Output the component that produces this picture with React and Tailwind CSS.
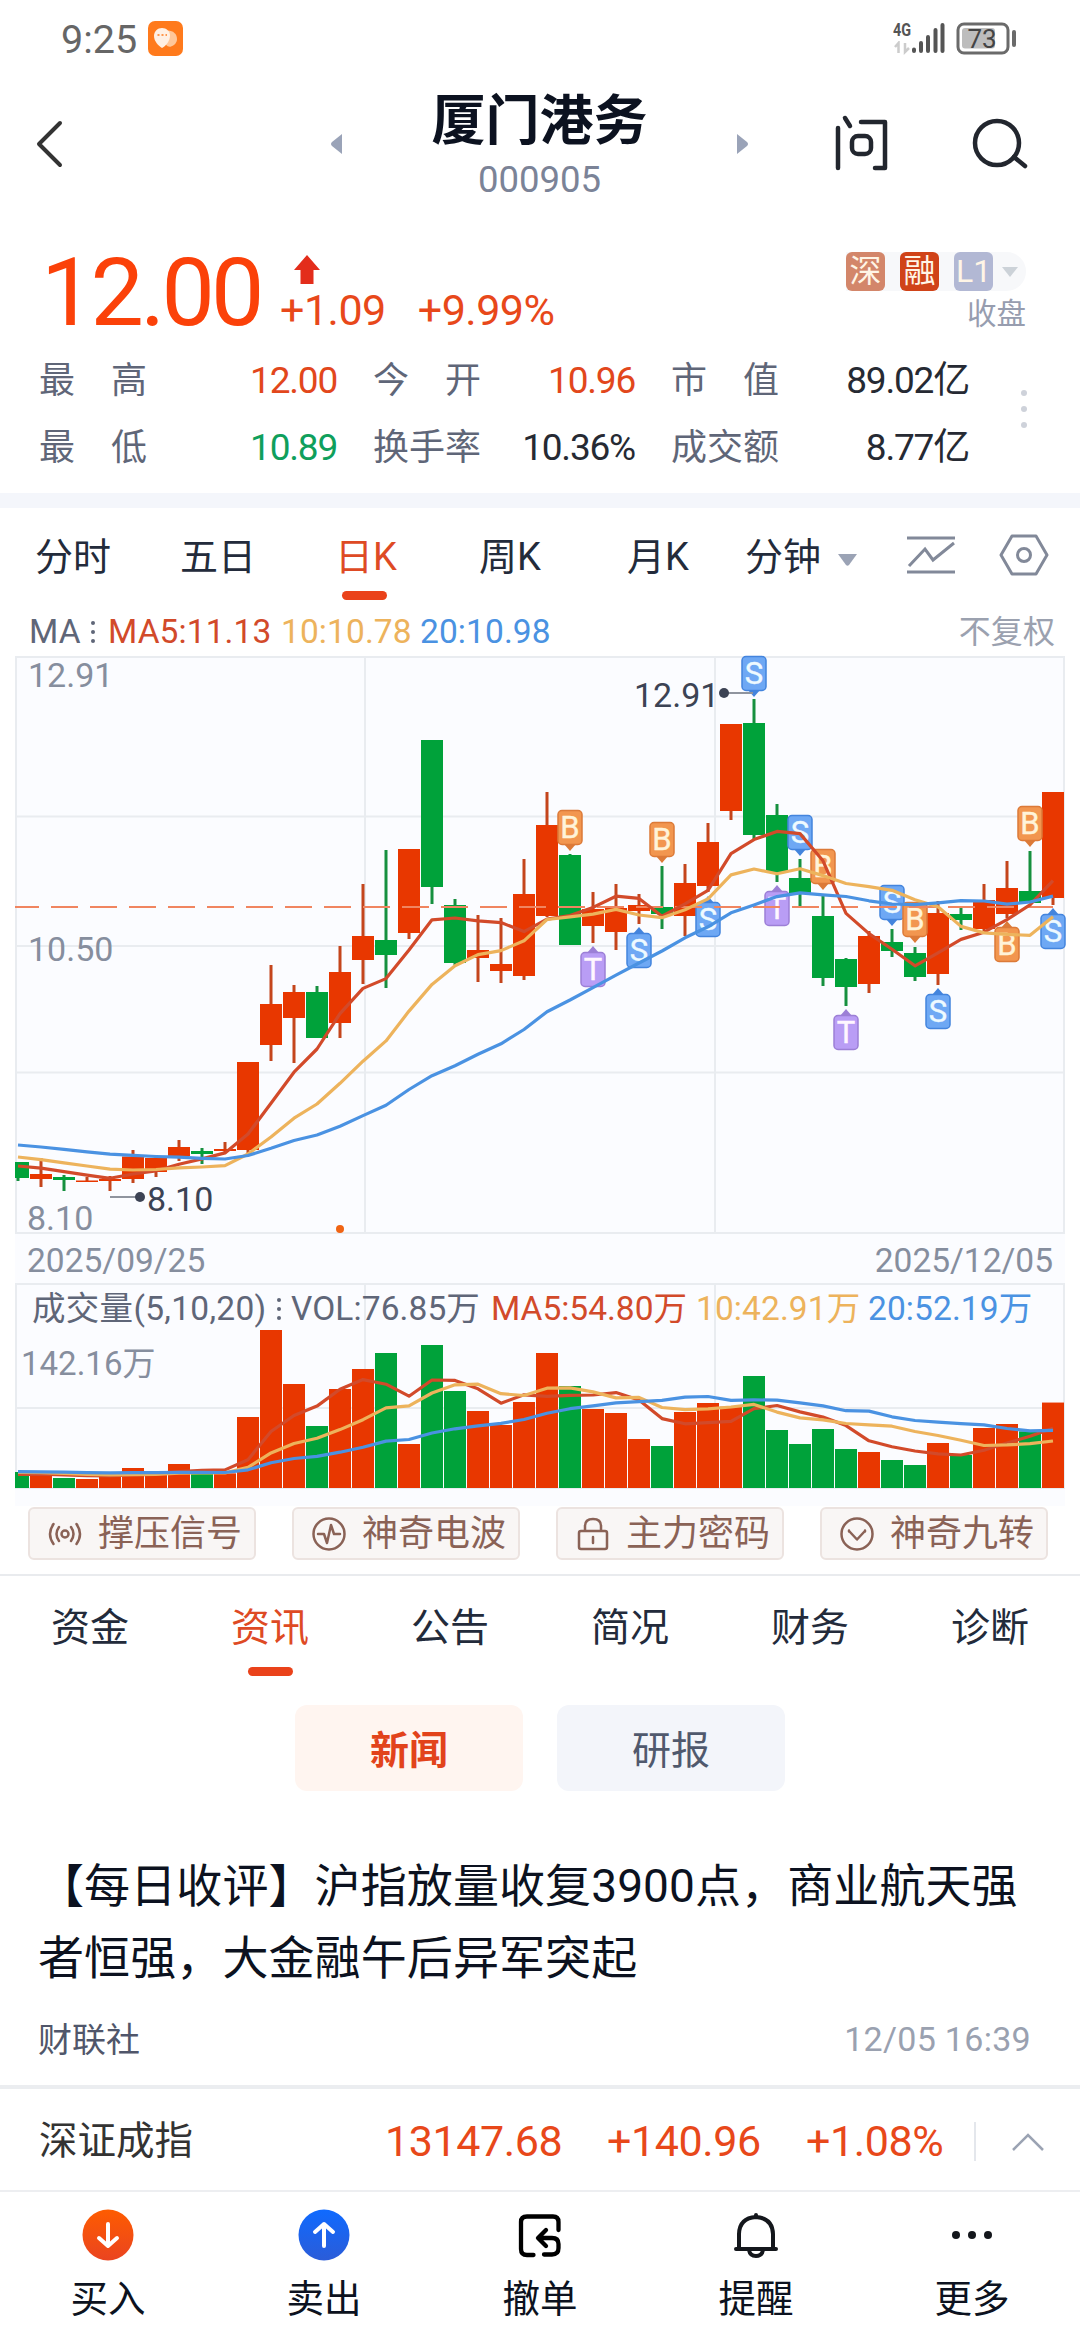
import React from "react";

// one trading day: [up, open/close top, open/close bottom, high, low, volume]
const days = [
  [0, 1162, 1178, 1162, 1181, 14.4],
  [1, 1174, 1179, 1158, 1187, 12.3],
  [0, 1177, 1180, 1175, 1191, 9],
  [1, 1180.5, 1182, 1177, 1182, 8.1],
  [1, 1179, 1181, 1176, 1191, 11.1],
  [1, 1156.5, 1179, 1150, 1183, 18],
  [1, 1158, 1172, 1155, 1177, 15.3],
  [1, 1147, 1156, 1140, 1161, 21.6],
  [0, 1151, 1154, 1148, 1164, 13.2],
  [1, 1149, 1151, 1142, 1152, 13.2],
  [1, 1062, 1150, 1062, 1154, 63.9],
  [1, 1004, 1045, 965, 1061, 142.2],
  [1, 992, 1018, 985, 1063, 93.6],
  [0, 992, 1038, 986, 1038, 55.8],
  [1, 972, 1023, 946, 1038, 89.1],
  [1, 936, 960, 884, 984, 107.1],
  [0, 940, 955, 850, 988, 121.5],
  [1, 849, 933, 849, 939, 39.6],
  [0, 740, 887, 740, 904, 128.7],
  [0, 905, 963, 899, 965, 87.3],
  [1, 950, 958, 915, 982, 69.3],
  [1, 964, 971, 918, 983, 56.7],
  [1, 894, 976, 859, 980, 77.4],
  [1, 825, 916, 792, 917, 121.5],
  [0, 855, 945, 854, 945, 91.8],
  [1, 909, 926, 892, 943, 71.1],
  [1, 908, 932, 884, 950, 67.5],
  [1, 905, 911, 894, 924, 44.1],
  [0, 907, 914, 866, 929, 37.8],
  [1, 883, 916, 864, 936, 68.4],
  [1, 842, 886, 823, 892, 76.5],
  [1, 724, 811, 724, 820, 73.2],
  [0, 723, 835, 699, 840, 100.8],
  [0, 815, 873, 804, 882, 52.2],
  [0, 878, 894, 859, 906, 39.6],
  [0, 916, 978, 894, 986, 53.1],
  [0, 959, 987, 958, 1006, 35.1],
  [1, 936, 984, 931, 993, 32.4],
  [0, 942, 951, 929, 957, 25.2],
  [0, 953, 977, 947, 981, 20.7],
  [1, 913, 974, 901, 985, 40.5],
  [0, 914, 920, 906, 930, 29.7],
  [1, 900, 929, 884, 933, 54],
  [1, 888, 914, 861, 918, 57.6],
  [0, 891, 903, 851, 903, 51],
  [1, 792, 898, 792, 905, 76.9],
];

// the 19 days before the first one on screen, needed by the averages
const closesBefore = [...Array(10).fill(1133), ...Array(5).fill(1148), ...Array(4).fill(1163)];
const volumesBefore = [...Array(10).fill(15.3), ...Array(5).fill(15.9), ...Array(4).fill(11.8)];

const closes = [...closesBefore, ...days.map((d) => (d[0] ? d[1] : d[2]))];
const volumes = [...volumesBefore, ...days.map((d) => d[5])];

const xOf = (i) => 18 + i * 23;
const volY = (v) => 1488 - v / 0.9;

const average = (list, n) =>
  days.map((_, i) => {
    const end = i + 20;
    return list.slice(end - n, end).reduce((a, b) => a + b, 0) / n;
  });

const toPoints = (ys) => ys.map((y, i) => `${xOf(i)},${y.toFixed(1)}`).join(" ");

// day index, letter, y of the tip, pointer direction
const marks = [
  [24, "B", 851, "down"],
  [28, "B", 863, "down"],
  [32, "S", 697, "down"],
  [34, "S", 856, "down"],
  [35, "B", 890, "down"],
  [38, "S", 926, "down"],
  [39, "B", 943, "down"],
  [44, "B", 847, "down"],
  [25, "T", 946, "up"],
  [27, "S", 927, "up"],
  [30, "S", 896, "up"],
  [33, "T", 885, "up"],
  [36, "T", 1009, "up"],
  [40, "S", 988, "up"],
  [43, "B", 921, "up"],
  [45, "S", 908, "up"],
];

const markColors = {
  B: ["#f2964f", "#dc7a38", "#fff3d8"],
  S: ["#6ea8f4", "#4384dd", "#eefaff"],
  T: ["#b99df5", "#9c7fd6", "#fff6ff"],
};

const Mark = ({ index, letter, tip, dir }) => {
  const x = xOf(index);
  const s = dir === "down" ? -1 : 1;
  const top = dir === "down" ? tip - 41 : tip + 6;
  const [fill, stroke, text] = markColors[letter];
  return (
    <g>
      <path d={`M${x - 6} ${tip + s * 7}L${x} ${tip}L${x + 6} ${tip + s * 7}Z`} fill={stroke} />
      <rect x={x - 12} y={top + 0.5} width="24" height="34" rx="4" fill={fill} stroke={stroke} strokeWidth="1.5" />
      <text x={x} y={top + 28} textAnchor="middle" fontSize="31" fill={text} stroke={text} strokeWidth="0.4">
        {letter}
      </text>
    </g>
  );
};

const lineColors = ["#d24a2a", "#edb35c", "#4a92e2"];

const Lines = ({ list, map = (v) => v }) => (
  <g fill="none" strokeWidth="3.2" strokeLinejoin="round">
    {[5, 10, 20].map((n, k) => (
      <polyline key={n} points={toPoints(average(list, n).map(map))} stroke={lineColors[k]} />
    ))}
  </g>
);

const PriceChart = () => (
  <svg className="block h-[578px] w-[1050px] overflow-visible" viewBox="15 656 1050 578">
    <g stroke="#e9ecf0" strokeWidth="2" fill="none">
      <rect x="16" y="657" width="1048" height="576" />
      <path d="M15 816.5H1064M15 946H1064M15 1072.5H1064M365 657V1233M715 657V1233" />
    </g>
    <g fontSize="34" fill="#868e9e">
      <text x="28" y="687">12.91</text>
      <text x="28" y="961">10.50</text>
      <text x="27" y="1230">8.10</text>
    </g>
    {days.map(([up, top, bottom, high, low], i) => (
      <g key={i}>
        <rect x={xOf(i) - 1.5} y={high} width="3" height={low - high} fill={up ? "#c4451c" : "#16903f"} />
        <rect x={i ? xOf(i) - 11 : 15} y={top} width={i ? 22 : 14} height={bottom - top} fill={up ? "#e83700" : "#00a23a"} />
      </g>
    ))}
    {marks.map(([index, letter, tip, dir]) => (
      <Mark key={index} index={index} letter={letter} tip={tip} dir={dir} />
    ))}
    <path d="M15 907H1053" stroke="#f08560" strokeWidth="2" strokeDasharray="27 12" strokeDashoffset="3" />
    <Lines list={closes} />
    <g fill="#3c4354">
      <path d="M724 693H753M110 1197H140" stroke="#8f949e" strokeWidth="2" />
      <circle cx="724" cy="693" r="5" />
      <circle cx="140" cy="1197" r="5" />
      <text x="634" y="707" fontSize="34">12.91</text>
      <text x="147" y="1211" fontSize="34">8.10</text>
    </g>
    <circle cx="340" cy="1229" r="4" fill="#f06414" />
  </svg>
);

const VolumeChart = () => (
  <svg className="block h-[206px] w-[1050px]" viewBox="15 1283 1050 206">
    <path d="M16 1284H1064V1488H16ZM15 1408H1064M365 1284V1488M715 1284V1488" stroke="#e9ecf0" strokeWidth="2" fill="none" />
    {days.map(([up, , , , , vol], i) => (
      <rect key={i} x={xOf(i) - 11} y={volY(vol)} width="22" height={1488 - volY(vol)} fill={up ? "#e83700" : "#00a23a"} />
    ))}
    <Lines list={volumes} map={volY} />
  </svg>
);

const StatusBar = () => (
  <div className="flex h-[76px] items-center px-[61px] text-[#666]">
    <span className="pt-[4px] text-[39.5px] leading-none">9:25</span>
    <svg className="ml-[11px] size-[35px]" viewBox="0 0 35 35">
      <rect width="35" height="35" rx="7" fill="#ff7a1c" />
      <path d="M20 9.5c5 0 9 3.5 9 8.5 0 4-3 6.5-6 7.5-3 1-7-2-7-8z" fill="#ffc79a" />
      <path d="M14 7c4.5 0 8 3.3 8 7.5 0 5-3.5 10-8 12.5-4-2.5-8-7-8-12C6 10.500 9.500 7 14 7z" fill="#fff0e4" />
      <path d="M9.5 14h2M13.5 14h2M17.5 14h1.5" stroke="#ff7a1c" strokeWidth="1.5" />
    </svg>
    <div className="ml-auto flex h-[36px] w-[19px] flex-col">
      <span className="origin-left scale-x-80 text-[18px] leading-[20px] font-bold text-[#555]">4G</span>
      <svg className="mt-[1px] h-[14px] w-[19px]" viewBox="893 40 19 14" stroke="#ccc" strokeWidth="2.5" fill="none">
        <path d="M895 46l3.500-4v10M905 42v9l4-4" />
      </svg>
    </div>
    <svg className="h-[34px] w-[107px]" viewBox="912 20 107 34">
      <path d="M914 48.5V50M921 42V50M928 36V50M935.5 29V50M942.5 24V50" stroke="#555" strokeWidth="4" strokeLinecap="round" />
      <rect x="958" y="23" width="50" height="29" rx="6" fill="none" stroke="#6a6a6a" strokeWidth="3" />
      <rect x="962" y="27" width="33" height="20.5" rx="3" fill="#bdbdbd" />
      <text x="982" y="46.5" textAnchor="middle" fontSize="26" fill="#444">73</text>
      <path d="M1014 31V44" stroke="#6a6a6a" strokeWidth="4" strokeLinecap="round" />
    </svg>
  </div>
);

const Header = () => (
  <header className="flex h-[152px] items-start justify-between pl-[34px] pr-[50px]">
    <svg className="mt-[43px] h-[50px] w-[32px]" viewBox="0 0 32 50" fill="none" stroke="#333" strokeWidth="4" strokeLinecap="round" strokeLinejoin="round">
      <path d="M26 4L5 25L26 46" />
    </svg>
    <div className="ml-[180px] flex w-[417px] items-start justify-between">
      <svg className="mt-[58px] h-[20px] w-[11px]" viewBox="0 0 11 20" fill="#9aa3b8">
        <path d="M11 0V20L1 12Q-1 10 1 8Z" />
      </svg>
      <div className="text-center">
        <h1 className="h-[79px] pt-[14px] text-[54px] leading-[64px] font-bold text-[#0c1220]">厦门港务</h1>
        <p className="pt-[5px] text-[36.5px] leading-[40px] text-[#7b8397]">000905</p>
      </div>
      <svg className="mt-[58px] h-[20px] w-[11px]" viewBox="0 0 11 20" fill="#9aa3b8">
        <path d="M0 0V20L10 12Q12 10 10 8Z" />
      </svg>
    </div>
    <div className="flex gap-[81px]">
      <svg className="mt-[38px] h-[58px] w-[58px]" viewBox="833 114 58 58" fill="none" stroke="#22262e" strokeWidth="4.5" strokeLinecap="round" strokeLinejoin="round">
        <path d="M838 128V168M845 118L850 126M861 122H885V168H875" />
        <rect x="852" y="136" width="19" height="18" rx="6" />
      </svg>
      <svg className="mt-[42px] size-[58px]" viewBox="972 118 58 58" fill="none" stroke="#22262e" strokeWidth="4.5" strokeLinecap="round">
        <circle cx="997" cy="143" r="22" />
        <path d="M1014 157L1025 166" />
      </svg>
    </div>
  </header>
);

const stats = [
  [["最", "高"], "12.00", "text-[#e2471c]", ["今", "开"], "10.96", "text-[#e2471c]", ["市", "值"], "89.02亿"],
  [["最", "低"], "10.89", "text-[#0f9f5c]", ["换", "手", "率"], "10.36%", "text-[#262a33]", ["成", "交", "额"], "8.77亿"],
];

const Stat = ({ label, value, color, className }) => (
  <div className={`flex items-center justify-between ${className}`}>
    <span className="flex w-[108px] justify-between text-[36px] text-[#5f6678]">
      {label.map((c) => (
        <span key={c}>{c}</span>
      ))}
    </span>
    <span className={`text-[37px] tracking-[-1.2px] ${color}`}>{value}</span>
  </div>
);

const Quote = () => (
  <section className="h-[265px]">
    <div className="flex h-[119px] items-start pl-[41px] pr-[54px]">
      <span className="w-[239px] text-[95px] leading-[130px] tracking-[-3.8px] text-[#fb4109]">12.00</span>
      <div className="pt-[27px]">
        <svg className="ml-[13px] h-[30px] w-[28px]" viewBox="0 0 28 30">
          <path d="M14 0L27 15H20.5V29H7.5V15H1Z" fill="#e32d1b" />
        </svg>
        <div className="flex gap-[32px] text-[43px] leading-[50px] tracking-[-0.5px] text-[#e8481a]">
          <span>+1.09</span>
          <span>+9.99%</span>
        </div>
      </div>
      <div className="ml-auto flex flex-col items-end pt-[24px]">
        <div className="flex items-center gap-[15px] rounded-r-full bg-[#f7f8fa] text-[32px] leading-[39px] text-[#fff5e6]">
          <span className="size-[39px] rounded-md bg-[#d3866a] text-center">深</span>
          <span className="size-[39px] rounded-md bg-[#d04318] text-center">融</span>
          <span className="flex items-center gap-[9px]">
            <span className="size-[39px] rounded-md bg-[#b2b8d4] text-center">L1</span>
            <svg className="mr-[8px] h-[10px] w-[16px]" viewBox="0 0 16 10" fill="#ccd2d8">
              <path d="M0 0H16L8 10Z" />
            </svg>
          </span>
        </div>
        <span className="pt-[5px] text-[29.5px] leading-[36px] text-[#979daf]">收盘</span>
      </div>
    </div>
    <div className="flex">
      <div className="flex-1 pl-[39px]">
        {stats.map(([l1, v1, c1, l2, v2, c2, l3, v3]) => (
          <div key={v1} className="flex h-[67px]">
            <Stat label={l1} value={v1} color={c1} className="w-[298px]" />
            <Stat label={l2} value={v2} color={c2} className="ml-[36px] w-[262px]" />
            <Stat label={l3} value={v3} color="text-[#262a33]" className="ml-[36px] w-[298px]" />
          </div>
        ))}
      </div>
      <div className="mr-[53px] flex flex-col items-center gap-[10px] pt-[43px]">
        <i className="size-[6px] rounded-full bg-[#ced2da]" />
        <i className="size-[6px] rounded-full bg-[#ced2da]" />
        <i className="size-[6px] rounded-full bg-[#ced2da]" />
      </div>
    </div>
  </section>
);

const ChartTabs = () => (
  <div className="flex h-[98px] items-start pt-[24px] text-[38px] leading-[50px] text-[#232b3b]">
    <span className="ml-[35px] w-[145px]">分时</span>
    <span className="w-[155px]">五日</span>
    <span className="flex w-[144px] flex-col items-start text-[#de4a24]">
      日K
      <i className="mt-[9px] ml-[7px] h-[9px] w-[45px] rounded-full bg-[#ea421a]" />
    </span>
    <span className="w-[148px]">周K</span>
    <span className="w-[118px]">月K</span>
    <span>分钟</span>
    <svg className="mt-[22px] ml-[17px] h-[12px] w-[19px]" viewBox="0 0 19 12" fill="#9ba3b5">
      <path d="M0 0H19L11 11Q9.5 12.5 8 11Z" />
    </svg>
    <svg className="mt-[3px] ml-[49px] h-[40px] w-[50px]" viewBox="906 534 50 40" fill="none" stroke="#828999" strokeWidth="3">
      <path d="M907 537H955M907 571H955M909 565L925 548L933 559L954 542" />
    </svg>
    <svg className="ml-[43px] h-[46px] w-[50px]" viewBox="999 531 50 46" fill="none" stroke="#828999" strokeWidth="3">
      <path d="M1012 535H1036L1047 554L1036 573H1012L1001 554Z" strokeLinejoin="round" />
      <circle cx="1024" cy="554" r="6.5" />
    </svg>
  </div>
);

const Dots = () => (
  <span className="flex flex-col gap-[5px]">
    <i className="size-[4px] rounded-full bg-[#5f6678]" />
    <i className="size-[4px] rounded-full bg-[#5f6678]" />
    <i className="size-[4px] rounded-full bg-[#5f6678]" />
  </span>
);

const MaRow = () => (
  <div className="flex h-[50px] items-center pt-[1px] pl-[29px] pr-[25px] text-[33.5px] leading-none tracking-[0.1px]">
    <span className="w-[62px] text-[#5f6678]">MA</span>
    <Dots />
    <span className="ml-[13px] w-[173px] text-[#d24a2a]">MA5:11.13</span>
    <span className="w-[139px] text-[#edb35c]">10:10.78</span>
    <span className="text-[#4a92e2]">20:10.98</span>
    <span className="ml-auto text-[32px] text-[#9ba1af]">不复权</span>
  </div>
);

const VolumeLabels = () => (
  <div className="absolute top-0 left-0 w-full text-[33.5px] leading-[33px]">
    <div className="flex items-center pt-[9px] pl-[17px]">
      <span className="w-[245px] tracking-[0.3px] text-[#5f6678]">成交量(5,10,20)</span>
      <Dots />
      <span className="ml-[10px] w-[200px] tracking-[0.1px] text-[#5f6678]">VOL:76.85万</span>
      <span className="w-[205px] text-[#d24a2a]">MA5:54.80万</span>
      <span className="w-[172px] tracking-[0.1px] text-[#edb35c]">10:42.91万</span>
      <span className="tracking-[0.1px] text-[#4a92e2]">20:52.19万</span>
    </div>
    <div className="pt-[22px] pl-[6px] text-[33px] text-[#868e9e]">142.16万</div>
  </div>
);

const signals = [
  ["撑压信号", "M17 13.5a3.5 3.5 0 1 0 0 7 3.5 3.5 0 1 0 0-7M11 10q-5 7 0 14M23 10q5 7 0 14M5.5 7q-7 10 0 20M28.5 7q7 10 0 20"],
  ["神奇电波", "M17 1.5a15.5 15.5 0 1 0 0 31 15.5 15.5 0 1 0 0-31M6 17h6l3 9 4-18 3 9h6"],
  ["主力密码", "M5 14h24q2 0 2 2v14q0 2-2 2H5q-2 0-2-2V16q0-2 2-2ZM9 14V9q0-7 8-7t8 7v5M17 20v6"],
  ["神奇九转", "M17 1.5a15.5 15.5 0 1 0 0 31 15.5 15.5 0 1 0 0-31M9.5 14.5l7.5 8 7.5-8M9 13.5v1M25 13.5v1"],
];

const Signals = () => (
  <div className="flex h-[68px] items-start gap-[36px] pt-[1px] pl-[28px]">
    {signals.map(([name, d]) => (
      <div key={name} className="flex h-[53px] w-[228px] items-center rounded-md border-2 border-[#ece3e0] bg-[#f9f6f5] pl-[18px] text-[#8a6256]">
        <svg className="size-[34px]" viewBox="0 0 34 34" fill="none" stroke="#8a6256" strokeWidth="2.5" strokeLinecap="round" strokeLinejoin="round">
          <path d={d} />
        </svg>
        <span className="ml-[16px] pt-[1px] text-[36px] leading-none">{name}</span>
      </div>
    ))}
  </div>
);

const InfoTabs = () => (
  <div className="flex h-[129px] border-t-2 border-[#e9ebee] pt-[26px] text-[39px] leading-[52px] text-[#232b3b]">
    {["资金", "资讯", "公告", "简况", "财务", "诊断"].map((name) => (
      <div key={name} className={`flex w-[180px] flex-col items-center ${name === "资讯" ? "text-[#de4a24]" : ""}`}>
        {name}
        {name === "资讯" && <i className="mt-[13px] h-[9px] w-[45px] rounded-full bg-[#ea421a]" />}
      </div>
    ))}
  </div>
);

const News = () => (
  <section className="h-[382px]">
    <div className="flex justify-center gap-[34px] pt-[2px] text-[39px] leading-[93px]">
      <span className="h-[86px] w-[228px] rounded-xl bg-[#fff5f0] text-center font-bold text-[#e2431b]">新闻</span>
      <span className="h-[86px] w-[228px] rounded-xl bg-[#f3f5fa] text-center text-[#50596d]">研报</span>
    </div>
    <p className="pt-[59px] pl-[38px] text-[46px] leading-[72px] tracking-[0.1px] text-[#0c1220]">
      【每日收评】沪指放量收复3900点，商业航天强
      <br />
      者恒强，大金融午后异军突起
    </p>
    <div className="flex items-center justify-between pt-[23px] pl-[38px] pr-[49px] text-[34px] leading-[44px]">
      <span className="text-[#50566a]">财联社</span>
      <span className="pb-[2px] tracking-[0.3px] text-[#9aa1b0]">12/05 16:39</span>
    </div>
  </section>
);

const IndexBar = () => (
  <div className="flex h-[105px] items-center border-t-4 border-[#ebedf0] pt-[4px] pl-[39px] pr-[35px] text-[43px] leading-none tracking-[-0.4px] text-[#e8481a]">
    <span className="w-[346px] text-[38.5px] tracking-normal text-[#333]">深证成指</span>
    <span className="w-[222px]">13147.68</span>
    <span className="w-[199px]">+140.96</span>
    <span>+1.08%</span>
    <i className="ml-auto h-[39px] w-[2px] bg-[#e4e7ec]" />
    <svg className="ml-[35px] h-[20px] w-[34px]" viewBox="0 0 34 20" fill="none" stroke="#9ba3b3" strokeWidth="2.5">
      <path d="M2 18L17 3L32 18" />
    </svg>
  </div>
);

const Item = ({ name, children }) => (
  <div className="flex w-[216px] flex-col items-center text-[37.5px] leading-[48px] text-[#0c1220]">
    <svg className="mb-[14px] size-[52px]" viewBox="0 0 52 52" fill="none" stroke="#14171c" strokeWidth="4" strokeLinecap="round" strokeLinejoin="round">
      {children}
    </svg>
    {name}
  </div>
);

const BottomNav = () => (
  <nav className="flex h-[149px] border-t-2 border-[#edeef1] pt-[17px]">
    <Item name="买入">
      <defs>
        <linearGradient id="buy" x1="0" y1="0" x2="0" y2="1">
          <stop stopColor="#fe5c00" />
          <stop offset="1" stopColor="#ea4420" />
        </linearGradient>
        <linearGradient id="sell" x1="0" y1="0" x2="0" y2="1">
          <stop stopColor="#0f6aff" />
          <stop offset="1" stopColor="#2b5cd8" />
        </linearGradient>
      </defs>
      <circle cx="26" cy="26" r="25.5" fill="url(#buy)" stroke="none" />
      <path d="M26 15V37M17 29L26 37L35 29" stroke="#fff" />
    </Item>
    <Item name="卖出">
      <circle cx="26" cy="26" r="25.5" fill="url(#sell)" stroke="none" />
      <path d="M26 37V15M17 23L26 15L35 23" stroke="#fff" />
    </Item>
    <Item name="撤单">
      <path stroke="#000" strokeWidth="4.3" d="M44.5 21V13Q44.5 7.5 39 7.5H13Q7 7.5 7 13V40Q7 46 13 46H19.5M32 21L24 29L32 37M25 29H38Q44.5 29 44.5 35V39Q44.5 45.5 38 45.5H30" />
    </Item>
    <Item name="提醒">
      <path d="M6 40H46M9 39V25Q9.5 9 26 8Q42.5 9 43 25V39M26 6V8M19 41Q20 47 26 47Q32 47 33 41" />
    </Item>
    <Item name="更多">
      <g fill="#14171c" stroke="none">
        <circle cx="10" cy="26" r="4" />
        <circle cx="26" cy="26" r="4" />
        <circle cx="42" cy="26" r="4" />
      </g>
    </Item>
  </nav>
);

const App = () => {
  return (
    <div className="flex h-[2340px] w-[1080px] flex-col overflow-hidden bg-white font-['Roboto','Noto_Sans_CJK_SC',sans-serif]">
      <StatusBar />
      <Header />
      <Quote />
      <div className="h-[15px] bg-[#f4f6fb]" />
      <ChartTabs />
      <MaRow />
      <div className="mx-[15px] bg-[#fbfcff]">
        <PriceChart />
        <div className="flex h-[49px] items-center justify-between px-[12px] pt-[5px] text-[33.5px] leading-none text-[#868e9e]">
          <span>2025/09/25</span>
          <span>2025/12/05</span>
        </div>
        <div className="relative h-[223px]">
          <VolumeChart />
          <VolumeLabels />
        </div>
      </div>
      <Signals />
      <InfoTabs />
      <News />
      <IndexBar />
      <BottomNav />
    </div>
  );
};

export default App;
